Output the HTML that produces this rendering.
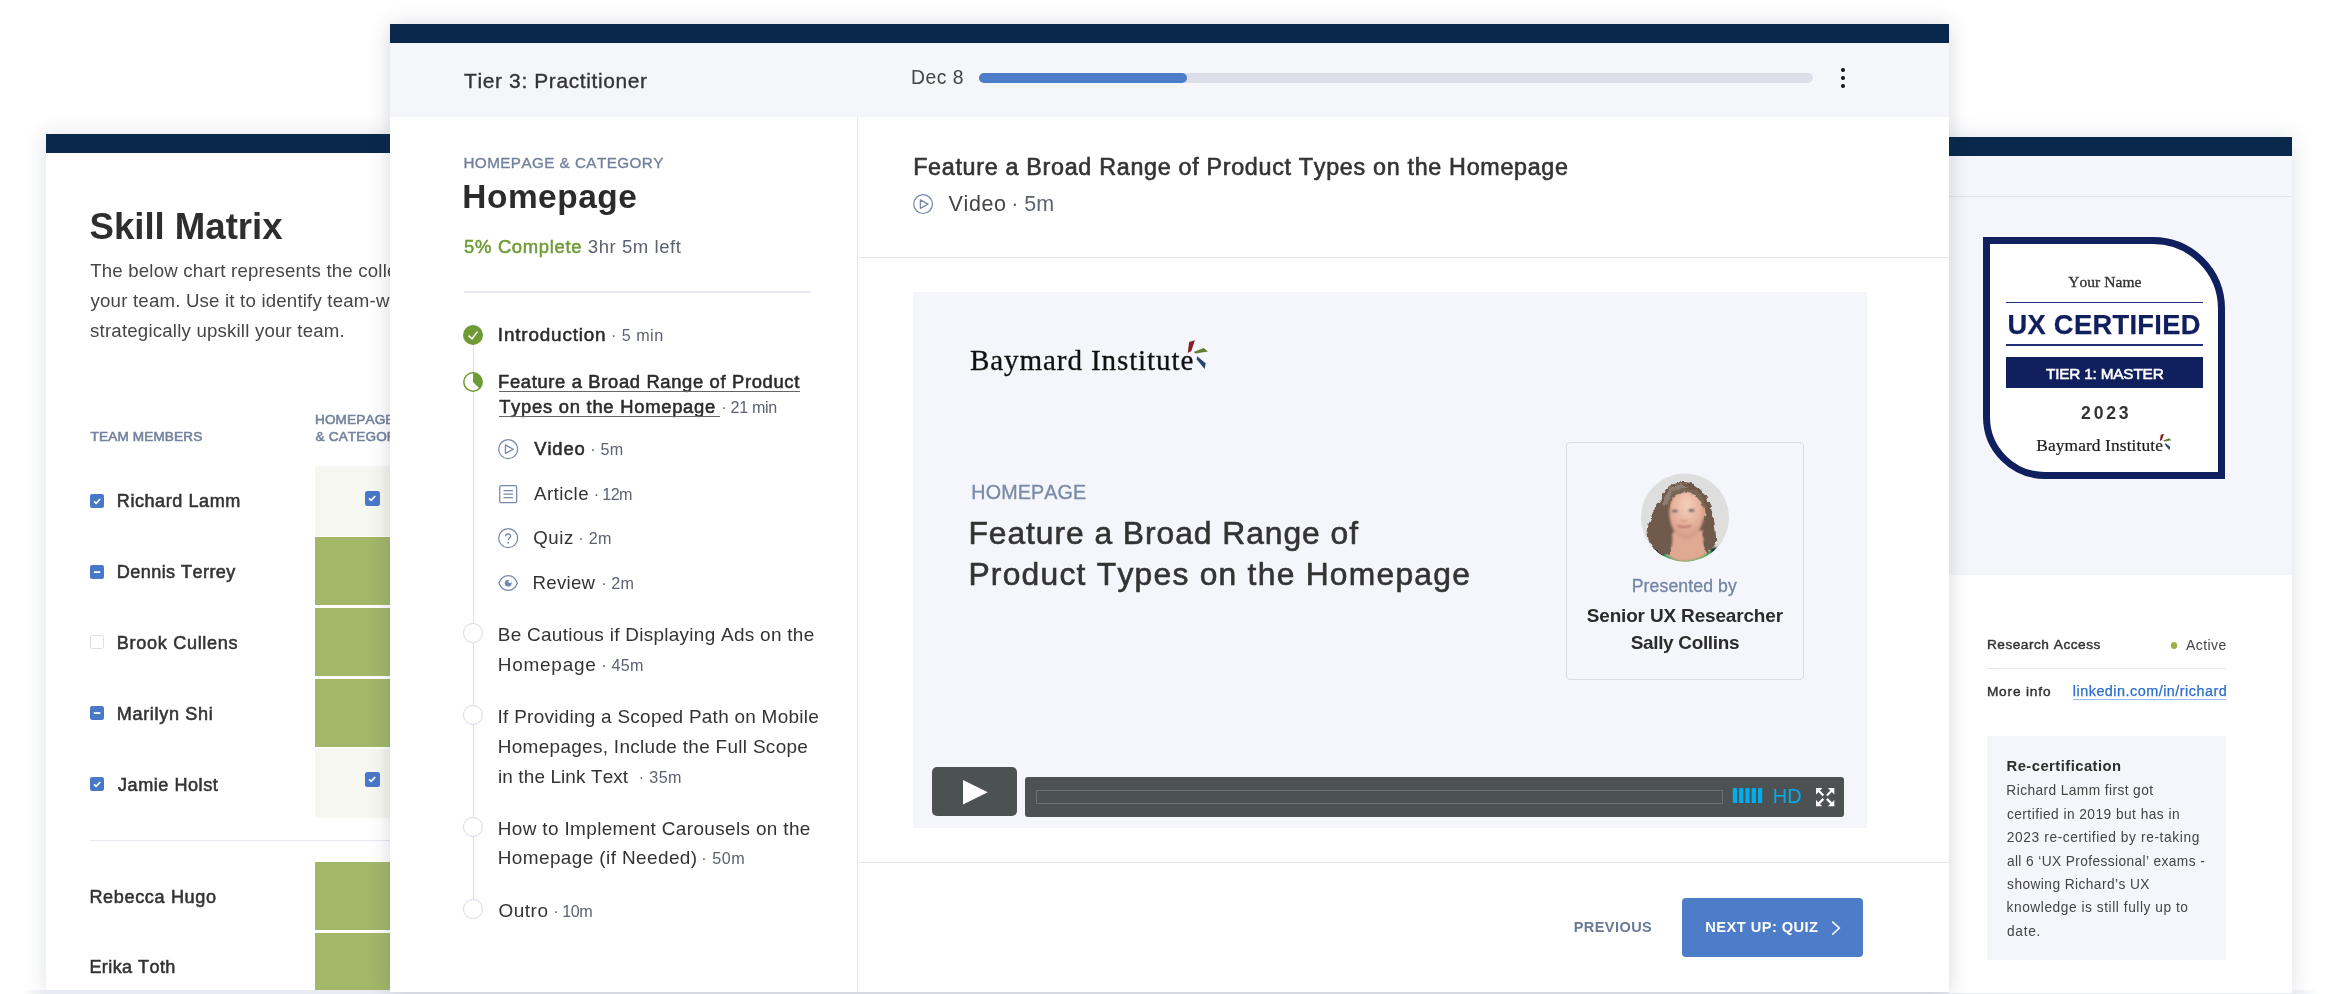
<!DOCTYPE html>
<html lang="en"><head><meta charset="utf-8"><title>Baymard UX Training</title>
<style>
html,body{margin:0;padding:0;background:#fff;}
body{width:2340px;height:994px;position:relative;overflow:hidden;font-family:"Liberation Sans",sans-serif;font-kerning:none;-webkit-font-smoothing:antialiased;}
.t{position:absolute;white-space:pre;font-kerning:none;font-variant-ligatures:none;}
#root{position:absolute;left:0;top:0;width:2340px;height:994px;overflow:hidden;will-change:transform;}
.r{position:absolute;}
.r>svg{display:block}
svg.r{display:block;overflow:visible}
.abs{position:absolute;width:2340px;height:994px}
.card{position:absolute;background:#fff;box-shadow:0 1px 21px rgba(35,45,75,.15);}
.clip{position:absolute;overflow:hidden}
#foot{position:absolute;left:0;top:990px;width:2340px;height:4px;}
</style></head><body>
<div id="root">
<section id="skill-matrix" aria-label="Skill Matrix">
<div class="card" id="left" style="left:46px;top:134px;width:420px;height:855.6px;">
</div>
<div class="clip" id="leftc" style="left:46px;top:134px;width:344px;height:855.6px;">
<div class="abs" style="left:-46px;top:-134px;">
<div class="r" style="left:46.00px;top:134.00px;width:424.00px;height:19.00px;background:#09284b;"></div>
<span class="t" style="left:89.55px;top:208.70px;font-size:36.61px;line-height:36.61px;letter-spacing:-0.024px;color:#2e2e2e;font-weight:700;">Skill Matrix</span>
<span class="t" style="left:90.08px;top:322.20px;font-size:18.65px;line-height:18.65px;letter-spacing:0.193px;color:#464646;">strategically upskill your team.</span>
<span class="t" style="left:90.18px;top:262.00px;font-size:18.65px;line-height:18.65px;letter-spacing:0.193px;color:#464646;">The below chart represents the collective skill of</span>
<span class="t" style="left:90.55px;top:292.10px;font-size:18.65px;line-height:18.65px;letter-spacing:0.193px;color:#464646;">your team. Use it to identify team-wide gaps and</span>
<span class="t" style="left:90.60px;top:429.91px;font-size:13.57px;line-height:13.57px;letter-spacing:0.146px;color:#74839e;-webkit-text-stroke:0.6px #74839e;">TEAM MEMBERS</span>
<span class="t" style="left:314.99px;top:412.91px;font-size:13.57px;line-height:13.57px;letter-spacing:0.146px;color:#74839e;-webkit-text-stroke:0.6px #74839e;">HOMEPAGE</span>
<span class="t" style="left:315.62px;top:429.91px;font-size:13.57px;line-height:13.57px;letter-spacing:0.146px;color:#74839e;-webkit-text-stroke:0.6px #74839e;">&amp; CATEGORY</span>
<span class="t" style="left:116.79px;top:492.49px;font-size:18.08px;line-height:18.08px;letter-spacing:0.542px;color:#333;-webkit-text-stroke:0.55px #333;">Richard Lamm</span>
<div class="r" style="left:90px;top:493.7px;width:14.2px;height:14.2px;border-radius:2.2px;background:#4878c8;"><svg viewBox="0.4 0.4 14.2 14.2" width="14.2" height="14.2"><path d="M4.4 7.8 L6.6 9.8 L10.6 5.4" fill="none" stroke="#fff" stroke-width="1.7"/></svg></div>
<span class="t" style="left:116.79px;top:563.29px;font-size:18.08px;line-height:18.08px;letter-spacing:0.419px;color:#333;-webkit-text-stroke:0.55px #333;">Dennis Terrey</span>
<div class="r" style="left:90px;top:564.5px;width:14.2px;height:14.2px;border-radius:2.2px;background:#4878c8;"><svg viewBox="0.4 0.4 14.2 14.2" width="14.2" height="14.2"><path d="M4.3 7.5 H10.7" fill="none" stroke="#fff" stroke-width="1.8"/></svg></div>
<span class="t" style="left:116.79px;top:634.09px;font-size:18.08px;line-height:18.08px;letter-spacing:0.686px;color:#333;-webkit-text-stroke:0.55px #333;">Brook Cullens</span>
<div class="r" style="left:90px;top:635.3px;width:14.2px;height:14.2px;border:1px solid #dcdfe8;border-radius:2.2px;background:#fff;box-sizing:border-box"></div>
<span class="t" style="left:116.79px;top:704.89px;font-size:18.08px;line-height:18.08px;letter-spacing:0.653px;color:#333;-webkit-text-stroke:0.55px #333;">Marilyn Shi</span>
<div class="r" style="left:90px;top:706.1px;width:14.2px;height:14.2px;border-radius:2.2px;background:#4878c8;"><svg viewBox="0.4 0.4 14.2 14.2" width="14.2" height="14.2"><path d="M4.3 7.5 H10.7" fill="none" stroke="#fff" stroke-width="1.8"/></svg></div>
<span class="t" style="left:117.99px;top:775.69px;font-size:18.08px;line-height:18.08px;letter-spacing:0.532px;color:#333;-webkit-text-stroke:0.55px #333;">Jamie Holst</span>
<div class="r" style="left:90px;top:776.9px;width:14.2px;height:14.2px;border-radius:2.2px;background:#4878c8;"><svg viewBox="0.4 0.4 14.2 14.2" width="14.2" height="14.2"><path d="M4.4 7.8 L6.6 9.8 L10.6 5.4" fill="none" stroke="#fff" stroke-width="1.7"/></svg></div>
<div class="r" style="left:314.50px;top:466.30px;width:155.50px;height:69.70px;background:#f6f7f0;"></div>
<div class="r" style="left:314.50px;top:537.20px;width:155.50px;height:68.00px;background:#a2b768;"></div>
<div class="r" style="left:314.50px;top:608.00px;width:155.50px;height:68.00px;background:#a2b768;"></div>
<div class="r" style="left:314.50px;top:679.00px;width:155.50px;height:67.80px;background:#a2b768;"></div>
<div class="r" style="left:314.50px;top:749.00px;width:155.50px;height:68.80px;background:#f6f7f0;"></div>
<div class="r" style="left:315.00px;top:862.20px;width:155.00px;height:68.00px;background:#a2b768;"></div>
<div class="r" style="left:315.00px;top:933.00px;width:155.00px;height:56.60px;background:#a2b768;"></div>
<div class="r" style="left:365px;top:491.3px;width:15px;height:15px;border-radius:2.5px;background:#4878c8;"><svg viewBox="0.4 0.4 14.2 14.2" width="14.2" height="14.2"><path d="M4.4 7.8 L6.6 9.8 L10.6 5.4" fill="none" stroke="#fff" stroke-width="1.7"/></svg></div>
<div class="r" style="left:364.7px;top:772.4px;width:15px;height:15px;border-radius:2.5px;background:#4878c8;"><svg viewBox="0.4 0.4 14.2 14.2" width="14.2" height="14.2"><path d="M4.4 7.8 L6.6 9.8 L10.6 5.4" fill="none" stroke="#fff" stroke-width="1.7"/></svg></div>
<div class="r" style="left:90.00px;top:839.70px;width:380.00px;height:1.20px;background:#e6e9f0;"></div>
<span class="t" style="left:89.39px;top:888.39px;font-size:18.08px;line-height:18.08px;letter-spacing:0.644px;color:#333;-webkit-text-stroke:0.55px #333;">Rebecca Hugo</span>
<span class="t" style="left:89.39px;top:958.49px;font-size:18.08px;line-height:18.08px;letter-spacing:0.401px;color:#333;-webkit-text-stroke:0.55px #333;">Erika Toth</span>
</div></div>
</section>
<section id="certification" aria-label="UX Certification">
<div class="card" id="right" style="left:1880px;top:137px;width:412.3px;height:855.6px;"></div>
<div class="r" style="left:1880.00px;top:137.20px;width:412.30px;height:18.60px;background:#09284b;"></div>
<div class="r" style="left:1880.00px;top:155.80px;width:412.30px;height:419.20px;background:#f5f6fb;"></div>
<div class="r" style="left:1880.00px;top:196.00px;width:412.30px;height:1.10px;background:#dfe2ee;"></div>
<div class="r" style="left:1983px;top:236.7px;width:242.3px;height:242.1px;box-sizing:border-box;border:7.3px solid #101f5e;background:#fff;border-top-right-radius:72px;border-bottom-left-radius:62px;"></div>
<span class="t" style="left:2068.20px;top:273.80px;font-size:15.53px;line-height:15.53px;letter-spacing:0.061px;color:#333;font-family:'Liberation Serif',serif;-webkit-text-stroke:0.35px #333;">Your Name</span>
<div class="r" style="left:2006.00px;top:302.10px;width:197.00px;height:1.40px;background:#22307a;"></div>
<span class="t" style="left:2007.39px;top:311.11px;font-size:27.27px;line-height:27.27px;letter-spacing:0.342px;color:#101f5e;font-weight:700;-webkit-text-stroke:0.25px #101f5e;">UX CERTIFIED</span>
<div class="r" style="left:2006.00px;top:344.20px;width:197.00px;height:1.40px;background:#22307a;"></div>
<div class="r" style="left:2006.00px;top:357.30px;width:197.00px;height:31.10px;background:#101f5e;"></div>
<span class="t" style="left:2046.03px;top:365.52px;font-size:15.33px;line-height:15.33px;letter-spacing:-0.185px;color:#fff;-webkit-text-stroke:0.55px #fff;">TIER 1: MASTER</span>
<span class="t" style="left:2081.09px;top:405.09px;font-size:17.61px;line-height:17.61px;letter-spacing:2.791px;color:#333;font-weight:700;">2023</span>
<span class="t" style="left:2036.20px;top:436.75px;font-size:17.38px;line-height:17.38px;letter-spacing:0.118px;color:#1a1a1a;font-family:'Liberation Serif',serif;-webkit-text-stroke:0.2px #1a1a1a;">Baymard Institute</span>
<svg class="r" style="left:0;top:0" width="2340" height="994" viewBox="0 0 2340 994"><polygon points="2160.72,434.85 2163.97,433.77 2161.92,439.98 2159.87,441.00" fill="#8a1c22"/><polygon points="2163.28,440.43 2168.92,438.21 2171.42,440.20 2164.31,441.40" fill="#5f7f2e"/><polygon points="2165.16,442.93 2170.11,446.86 2169.48,450.16 2165.05,444.70" fill="#2a4470"/></svg>
<span class="t" style="left:1986.90px;top:638.13px;font-size:13.66px;line-height:13.66px;letter-spacing:0.518px;color:#333;-webkit-text-stroke:0.45px #333;">Research Access</span>
<div class="r" style="left:2170.5px;top:642.2px;width:6.8px;height:6.8px;border-radius:50%;background:#9ab13e"></div>
<span class="t" style="left:2185.97px;top:638.32px;font-size:14.03px;line-height:14.03px;letter-spacing:0.411px;color:#444;">Active</span>
<div class="r" style="left:1987.00px;top:667.90px;width:239.00px;height:1.10px;background:#e4e7ef;"></div>
<span class="t" style="left:1986.90px;top:685.03px;font-size:13.66px;line-height:13.66px;letter-spacing:0.836px;color:#333;-webkit-text-stroke:0.45px #333;">More info</span>
<span class="t" style="left:2072.85px;top:684.40px;font-size:14.41px;line-height:14.41px;letter-spacing:0.479px;color:#2a6dcc;-webkit-text-stroke:0.25px #2a6dcc;">linkedin.com/in/richard</span>
<div class="r" style="left:2073.00px;top:698.60px;width:153.00px;height:1.00px;background:#9fbde9;"></div>
<div class="r" style="left:1986.80px;top:736.20px;width:239.20px;height:223.50px;background:#f5f6fb;"></div>
<span class="t" style="left:2006.51px;top:759.24px;font-size:14.83px;line-height:14.83px;letter-spacing:0.445px;color:#2d2d2d;font-weight:700;">Re-certification</span>
<span class="t" style="left:2006.37px;top:784.48px;font-size:13.72px;line-height:13.72px;letter-spacing:0.412px;color:#444;">Richard Lamm first got</span>
<span class="t" style="left:2006.92px;top:807.84px;font-size:13.72px;line-height:13.72px;letter-spacing:0.464px;color:#444;">certified in 2019 but has in</span>
<span class="t" style="left:2006.81px;top:831.20px;font-size:13.72px;line-height:13.72px;letter-spacing:0.616px;color:#444;">2023 re-certified by re-taking</span>
<span class="t" style="left:2006.92px;top:854.56px;font-size:13.72px;line-height:13.72px;letter-spacing:0.392px;color:#444;">all 6 ‘UX Professional’ exams -</span>
<span class="t" style="left:2007.12px;top:877.92px;font-size:13.72px;line-height:13.72px;letter-spacing:0.431px;color:#444;">showing Richard’s UX</span>
<span class="t" style="left:2006.58px;top:901.28px;font-size:13.72px;line-height:13.72px;letter-spacing:0.550px;color:#444;">knowledge is still fully up to</span>
<span class="t" style="left:2006.92px;top:924.64px;font-size:13.72px;line-height:13.72px;letter-spacing:0.730px;color:#444;">date.</span>
</section>
<section id="course" aria-label="Course player">
<div class="r" style="left:22px;top:989.6px;width:2296px;height:5px;background:linear-gradient(to right,rgba(232,235,241,0) 0,#e8ebf1 24px,#e8ebf1 2270px,rgba(232,235,241,0) 2296px)"></div>
<div class="r" style="left:1949.00px;top:989.60px;width:343.30px;height:3.00px;background:#fff;"></div>
<div class="card" id="center" style="left:390px;top:24px;width:1558.7px;height:967.8px;box-shadow:0 1px 20px rgba(35,45,75,.19)"></div>
<div class="r" style="left:390.00px;top:24.20px;width:1558.70px;height:18.60px;background:#09284b;"></div>
<div class="r" style="left:390.00px;top:42.80px;width:1558.70px;height:74.20px;background:#f5f6fa;"></div>
<div class="r" style="left:857.00px;top:117.00px;width:1.20px;height:874.80px;background:#e4e7ee;"></div>
<span class="t" style="left:464.10px;top:70.67px;font-size:20.94px;line-height:20.94px;letter-spacing:0.628px;color:#333;-webkit-text-stroke:0.35px #333;">Tier 3: Practitioner</span>
<span class="t" style="left:911.01px;top:68.11px;font-size:19.36px;line-height:19.36px;letter-spacing:0.466px;color:#444;">Dec 8</span>
<div class="r" style="left:978.70px;top:72.90px;width:834.50px;height:10.10px;background:#dcdfe9;border-radius:5px"></div>
<div class="r" style="left:978.70px;top:72.90px;width:208.80px;height:10.10px;background:#4d7cc9;border-radius:5px"></div>
<div class="r" style="left:1841px;top:68.0px;width:4.2px;height:4.2px;border-radius:50%;background:#111"></div>
<div class="r" style="left:1841px;top:75.8px;width:4.2px;height:4.2px;border-radius:50%;background:#111"></div>
<div class="r" style="left:1841px;top:83.5px;width:4.2px;height:4.2px;border-radius:50%;background:#111"></div>
<span class="t" style="left:463.43px;top:154.72px;font-size:15.21px;line-height:15.21px;letter-spacing:0.456px;color:#72819c;-webkit-text-stroke:0.35px #72819c;">HOMEPAGE &amp; CATEGORY</span>
<span class="t" style="left:462.37px;top:180.34px;font-size:33.38px;line-height:33.38px;letter-spacing:0.531px;color:#2b2b2b;font-weight:700;">Homepage</span>
<span class="t" style="left:464.11px;top:237.76px;font-size:18.47px;line-height:18.47px;letter-spacing:0.659px;color:#6e9b34;-webkit-text-stroke:0.5px #6e9b34;">5% Complete<span style="margin-left:5.66px;font-size:18.56px;letter-spacing:0.557px;color:#5d6272;font-weight:400;-webkit-text-stroke:0px #5d6272;">3hr 5m left</span></span>
<div class="r" style="left:464.00px;top:291.40px;width:347.00px;height:1.20px;background:#e6e9f0;"></div>
<div class="r" style="left:472.60px;top:344.00px;width:1.20px;height:555.00px;background:#dde0ec;"></div>
<svg class="r" style="left:463.1px;top:325.1px" width="20" height="20" viewBox="0 0 20 20"><circle cx="10" cy="10" r="10" fill="#6f9b37"/><path d="M5.6 10.6 L9 13.9 L14.4 6.6" fill="none" stroke="#fff" stroke-width="1.5"/></svg>
<span class="t" style="left:497.84px;top:325.55px;font-size:18.84px;line-height:18.84px;letter-spacing:0.852px;color:#2b2b2b;-webkit-text-stroke:0.55px #2b2b2b;">Introduction<span style="margin-left:4.48px;font-size:16.15px;letter-spacing:0.485px;color:#5d6272;font-weight:400;-webkit-text-stroke:0px #5d6272;">· 5 min</span></span>
<svg class="r" style="left:463.1px;top:372px" width="20" height="20" viewBox="0 0 20 20"><circle cx="10" cy="10" r="9.2" fill="#fff" stroke="#6f9b37" stroke-width="1.5"/><path d="M10 10 L10 0.8 A9.2 9.2 0 0 1 16.5 16.5 Z" fill="#6f9b37"/></svg>
<span class="t" style="left:498.07px;top:373.13px;font-size:18.39px;line-height:18.39px;letter-spacing:0.655px;color:#2b2b2b;-webkit-text-stroke:0.55px #2b2b2b;">Feature a Broad Range of Product</span>
<div class="r" style="left:498.70px;top:391.20px;width:301.00px;height:0.90px;background:#666;"></div>
<span class="t" style="left:499.16px;top:398.13px;font-size:18.39px;line-height:18.39px;letter-spacing:0.743px;color:#2b2b2b;-webkit-text-stroke:0.55px #2b2b2b;">Types on the Homepage<span style="margin-left:5.50px;font-size:16.15px;letter-spacing:-0.382px;color:#5d6272;font-weight:400;-webkit-text-stroke:0px #5d6272;">· 21 min</span></span>
<div class="r" style="left:498.70px;top:415.70px;width:221.10px;height:0.90px;background:#666;"></div>
<svg class="r" style="left:497.7px;top:439.2px" width="20.4" height="20.4" viewBox="0 0 20 20"><circle cx="10" cy="10" r="9.3" fill="none" stroke="#7587a8" stroke-width="1.2"/><path d="M7.3 5.8 L14.9 10 L7.3 14.2 Z" fill="none" stroke="#7587a8" stroke-width="1.25" stroke-linejoin="round"/></svg>
<span class="t" style="left:534.29px;top:439.73px;font-size:18.39px;line-height:18.39px;letter-spacing:0.865px;color:#2b2b2b;-webkit-text-stroke:0.55px #2b2b2b;">Video<span style="margin-left:4.62px;font-size:16.15px;letter-spacing:0.260px;color:#5d6272;font-weight:400;-webkit-text-stroke:0px #5d6272;">· 5m</span></span>
<svg class="r" style="left:499px;top:484.8px" width="18.4" height="18.4" viewBox="0 0 18 18"><rect x="0.7" y="0.7" width="16.6" height="16.6" rx="1.5" fill="none" stroke="#7587a8" stroke-width="1.2"/><path d="M4.4 5.6 H13.6 M4.4 9 H13.6 M4.4 12.4 H13.6" stroke="#7587a8" stroke-width="1.2"/></svg>
<span class="t" style="left:534.06px;top:484.60px;font-size:18.65px;line-height:18.65px;letter-spacing:0.456px;color:#333;">Article<span style="margin-left:4.70px;font-size:16.15px;letter-spacing:-0.625px;color:#5d6272;font-weight:400;-webkit-text-stroke:0px #5d6272;">· 12m</span></span>
<svg class="r" style="left:497.7px;top:528.1px" width="20.4" height="20.4" viewBox="0 0 20 20"><circle cx="10" cy="10" r="9.3" fill="none" stroke="#7587a8" stroke-width="1.2"/><path d="M7.6 8.0 C7.6 5.2 12.4 5.2 12.4 8.0 C12.4 9.8 10 9.9 10 11.9" fill="none" stroke="#7587a8" stroke-width="1.3"/><circle cx="10" cy="14.4" r="0.9" fill="#7587a8"/></svg>
<span class="t" style="left:533.22px;top:529.40px;font-size:18.65px;line-height:18.65px;letter-spacing:0.552px;color:#333;">Quiz<span style="margin-left:4.60px;font-size:16.15px;letter-spacing:0.227px;color:#5d6272;font-weight:400;-webkit-text-stroke:0px #5d6272;">· 2m</span></span>
<svg class="r" style="left:497.7px;top:575.4px" width="20.4" height="16" viewBox="0 0 20 16"><path d="M0.8 8 C4.5 -1.8 15.5 -1.8 19.2 8 C15.5 17.8 4.5 17.8 0.8 8 Z" fill="none" stroke="#7587a8" stroke-width="1.25" stroke-linejoin="round"/><circle cx="10" cy="8.2" r="3.4" fill="#7587a8"/><circle cx="11.7" cy="6.5" r="1.5" fill="#fff"/></svg>
<span class="t" style="left:532.57px;top:574.20px;font-size:18.65px;line-height:18.65px;letter-spacing:0.264px;color:#333;">Review<span style="margin-left:5.87px;font-size:16.15px;letter-spacing:0.160px;color:#5d6272;font-weight:400;-webkit-text-stroke:0px #5d6272;">· 2m</span></span>
<div class="r" style="left:463.2px;top:623.2px;width:19.8px;height:19.8px;border-radius:50%;background:#fff;border:1.3px solid #d6d9e8;box-sizing:border-box"></div>
<div class="r" style="left:463.2px;top:705.3px;width:19.8px;height:19.8px;border-radius:50%;background:#fff;border:1.3px solid #d6d9e8;box-sizing:border-box"></div>
<div class="r" style="left:463.2px;top:816.9px;width:19.8px;height:19.8px;border-radius:50%;background:#fff;border:1.3px solid #d6d9e8;box-sizing:border-box"></div>
<div class="r" style="left:463.2px;top:898.8px;width:19.8px;height:19.8px;border-radius:50%;background:#fff;border:1.3px solid #d6d9e8;box-sizing:border-box"></div>
<span class="t" style="left:497.75px;top:626.47px;font-size:18.94px;line-height:18.94px;letter-spacing:0.289px;color:#333;">Be Cautious if Displaying Ads on the</span>
<span class="t" style="left:497.75px;top:656.37px;font-size:18.94px;line-height:18.94px;letter-spacing:0.766px;color:#333;">Homepage<span style="margin-left:4.68px;font-size:16.15px;letter-spacing:0.250px;color:#5d6272;font-weight:400;-webkit-text-stroke:0px #5d6272;">· 45m</span></span>
<span class="t" style="left:497.55px;top:707.97px;font-size:18.94px;line-height:18.94px;letter-spacing:0.275px;color:#333;">If Providing a Scoped Path on Mobile</span>
<span class="t" style="left:497.75px;top:737.87px;font-size:18.94px;line-height:18.94px;letter-spacing:0.316px;color:#333;">Homepages, Include the Full Scope</span>
<span class="t" style="left:498.03px;top:767.77px;font-size:18.94px;line-height:18.94px;letter-spacing:0.113px;color:#333;">in the Link Text<span style="margin-left:10.43px;font-size:16.15px;letter-spacing:0.375px;color:#5d6272;font-weight:400;-webkit-text-stroke:0px #5d6272;">· 35m</span></span>
<span class="t" style="left:497.75px;top:819.67px;font-size:18.94px;line-height:18.94px;letter-spacing:0.362px;color:#333;">How to Implement Carousels on the</span>
<span class="t" style="left:497.75px;top:849.27px;font-size:18.94px;line-height:18.94px;letter-spacing:0.409px;color:#333;">Homepage (if Needed)<span style="margin-left:3.70px;font-size:16.15px;letter-spacing:0.575px;color:#5d6272;font-weight:400;-webkit-text-stroke:0px #5d6272;">· 50m</span></span>
<span class="t" style="left:498.40px;top:901.67px;font-size:18.94px;line-height:18.94px;letter-spacing:0.559px;color:#333;">Outro<span style="margin-left:4.63px;font-size:16.15px;letter-spacing:-0.425px;color:#5d6272;font-weight:400;-webkit-text-stroke:0px #5d6272;">· 10m</span></span>
<span class="t" style="left:913.19px;top:155.57px;font-size:23.30px;line-height:23.30px;letter-spacing:0.699px;color:#333;-webkit-text-stroke:0.6px #333;">Feature a Broad Range of Product Types on the Homepage</span>
<svg class="r" style="left:912.8px;top:194.3px" width="20.2" height="20.2" viewBox="0 0 20 20"><circle cx="10" cy="10" r="9.3" fill="none" stroke="#7587a8" stroke-width="1.2"/><path d="M7.3 5.8 L14.9 10 L7.3 14.2 Z" fill="none" stroke="#7587a8" stroke-width="1.25" stroke-linejoin="round"/></svg>
<span class="t" style="left:948.51px;top:194.42px;font-size:21.47px;line-height:21.47px;letter-spacing:0.644px;color:#444;">Video<span style="margin-left:4.61px;font-size:21.46px;letter-spacing:-0.020px;color:#5d6272;font-weight:400;-webkit-text-stroke:0px #5d6272;">· 5m</span></span>
<div class="r" style="left:858.20px;top:256.70px;width:1090.50px;height:1.10px;background:#e4e7ee;"></div>
<div class="r" style="left:913.00px;top:291.50px;width:954.00px;height:536.20px;background:#f5f6fb;"></div>
<span class="t" style="left:970.01px;top:346.02px;font-size:29.11px;line-height:29.11px;letter-spacing:0.873px;color:#111;font-family:'Liberation Serif',serif;-webkit-text-stroke:0.3px #111;">Baymard Institute</span>
<svg class="r" style="left:0;top:0" width="2340" height="994" viewBox="0 0 2340 994"><polygon points="1189.20,342.10 1194.90,340.20 1191.30,351.10 1187.70,352.90" fill="#8a1c22"/><polygon points="1193.70,351.90 1203.60,348.00 1208.00,351.50 1195.50,353.60" fill="#5f7f2e"/><polygon points="1197.00,356.30 1205.70,363.20 1204.60,369.00 1196.80,359.40" fill="#2a4470"/></svg>
<span class="t" style="left:971.36px;top:482.73px;font-size:19.69px;line-height:19.69px;letter-spacing:0.133px;color:#7a8ba8;-webkit-text-stroke:0.35px #7a8ba8;">HOMEPAGE</span>
<span class="t" style="left:968.39px;top:517.57px;font-size:31.80px;line-height:31.80px;letter-spacing:0.954px;color:#333;-webkit-text-stroke:0.6px #333;">Feature a Broad Range of</span>
<span class="t" style="left:968.39px;top:558.67px;font-size:31.80px;line-height:31.80px;letter-spacing:1.247px;color:#333;-webkit-text-stroke:0.6px #333;">Product Types on the Homepage</span>
<div class="r" style="left:1566px;top:442.2px;width:237.9px;height:238.2px;border:1.2px solid #d9dce4;border-radius:4px;box-sizing:border-box"></div>
<svg class="r" style="left:1630px;top:465px" width="110" height="105" viewBox="0 0 1041 994"><defs><clipPath id="av"><circle cx="520" cy="498" r="417"/></clipPath><filter id="bl" x="-10%" y="-10%" width="120%" height="120%"><feGaussianBlur stdDeviation="8"/></filter><filter id="cu" x="-10%" y="-10%" width="120%" height="120%"><feTurbulence type="fractalNoise" baseFrequency="0.022" numOctaves="2" seed="7" result="n"/><feDisplacementMap in="SourceGraphic" in2="n" scale="46" xChannelSelector="R" yChannelSelector="G"/><feGaussianBlur stdDeviation="7"/></filter><radialGradient id="sk" cx="0.5" cy="0.3" r="0.75"><stop offset="0" stop-color="#f4d0bc"/><stop offset="0.55" stop-color="#e6b19b"/><stop offset="1" stop-color="#cf9680"/></radialGradient></defs><g clip-path="url(#av)"><rect width="1041" height="994" fill="#dedede"/><g filter="url(#cu)"><path d="M500 160 C400 160 320 220 300 310 C250 380 215 440 195 510 C165 580 160 660 180 720 C200 790 250 830 310 860 L420 860 L700 840 C760 820 800 790 815 730 C815 650 800 560 790 500 C775 420 745 340 715 290 C680 210 600 160 500 160 Z" fill="#6f5a4b"/><path d="M480 175 C400 185 340 240 320 330 C280 400 250 470 235 560 C260 470 330 400 390 300 C430 240 500 210 560 215 Z" fill="#8e7d70"/><path d="M200 560 C190 640 210 730 270 800 C250 720 250 640 270 560 Z" fill="#5a4638"/><path d="M770 480 C800 580 810 680 790 760 C770 700 760 600 740 520 Z" fill="#5a4638"/></g><g filter="url(#bl)"><path d="M400 640 L690 620 L700 760 C740 800 760 830 770 860 C700 900 600 925 520 925 C430 925 360 900 335 850 C370 810 395 780 400 740 Z" fill="#dfa992"/><path d="M372 440 C372 300 440 248 530 248 C625 248 700 320 700 440 C700 590 620 702 530 702 C450 702 372 600 372 440 Z" fill="url(#sk)"/><ellipse cx="718" cy="465" rx="22" ry="68" fill="#dca58e"/><path d="M225 785 L335 800 L350 872 L285 858 Z" fill="#1d1d1d"/><path d="M752 792 L825 772 L800 830 L765 852 Z" fill="#1d1d1d"/><path d="M328 822 C365 880 440 910 520 910 C620 910 715 868 765 796 L775 832 C720 902 620 940 520 940 C430 940 350 912 312 852 Z" fill="#1ea558"/></g><g filter="url(#cu)"><path d="M300 330 C330 420 360 520 370 640 C385 720 400 790 380 850 L300 850 C230 800 180 720 180 640 C190 520 240 420 300 330 Z" fill="#6f5a4b"/><path d="M700 330 C720 400 715 520 700 620 C690 700 700 780 725 835 C780 800 815 760 812 700 C805 580 780 440 740 340 Z" fill="#6f5a4b"/><path d="M400 250 C450 215 600 215 650 260 C690 300 700 340 705 400 C660 340 640 290 560 262 C500 255 440 270 395 330 C380 360 375 400 372 430 C360 360 370 290 400 250 Z" fill="#7a6656"/></g><g filter="url(#bl)" opacity="0.9"><ellipse cx="425" cy="436" rx="30" ry="11" fill="#4a4a52"/><ellipse cx="582" cy="431" rx="30" ry="11" fill="#4a4a52"/><path d="M455 578 C490 590 540 590 578 574" stroke="#a8575a" stroke-width="14" fill="none"/><path d="M480 522 C500 537 520 537 540 522" stroke="#c58a76" stroke-width="12" fill="none"/></g></g></svg>
<span class="t" style="left:1631.70px;top:577.95px;font-size:17.66px;line-height:17.66px;letter-spacing:0.103px;color:#7285a5;-webkit-text-stroke:0.3px #7285a5;">Presented by</span>
<span class="t" style="left:1586.75px;top:607.17px;font-size:18.94px;line-height:18.94px;letter-spacing:-0.141px;color:#2b2b2b;font-weight:700;">Senior UX Researcher</span>
<span class="t" style="left:1630.65px;top:634.47px;font-size:18.94px;line-height:18.94px;letter-spacing:-0.306px;color:#2b2b2b;font-weight:700;">Sally Collins</span>
<div class="r" style="left:932.00px;top:767.10px;width:84.50px;height:49.40px;background:#4c5252;border-radius:5px"></div>
<svg class="r" style="left:962.8px;top:779.5px" width="24.8" height="24.6" viewBox="0 0 24.8 24.6"><path d="M0 0 L24.8 12.3 L0 24.6 Z" fill="#fff"/></svg>
<div class="r" style="left:1025.00px;top:777.00px;width:818.60px;height:39.60px;background:#4c5252;border-radius:3px"></div>
<div class="r" style="left:1036.3px;top:789.8px;width:686.5px;height:13.8px;border:1px solid #6c7171;box-sizing:border-box"></div>
<svg class="r" style="left:1732px;top:787px" width="32" height="18" viewBox="0 0 32 18"><rect x="0.80" y="1.1" width="4.2" height="14.9" fill="#00adef"/><rect x="7.10" y="1.1" width="4.2" height="14.9" fill="#00adef"/><rect x="13.40" y="1.1" width="4.2" height="14.9" fill="#00adef"/><rect x="19.70" y="1.1" width="4.2" height="14.9" fill="#00adef"/><rect x="26.00" y="1.1" width="4.2" height="14.9" fill="#00adef"/></svg>
<span class="t" style="left:1772.87px;top:787.04px;font-size:19.92px;line-height:19.92px;letter-spacing:0.020px;color:#00adef;">HD</span>
<svg class="r" style="left:1815.8px;top:787.9px" width="18.3" height="18.3" viewBox="0 0 18 18"><g fill="#fff" stroke="none"><path d="M0 0 H6.3 L0 6.3 Z"/><path d="M18 0 V6.3 L11.7 0 Z"/><path d="M0 18 V11.7 L6.3 18 Z"/><path d="M18 18 H11.7 L18 11.7 Z"/></g><g stroke="#fff" stroke-width="2.2" fill="none"><path d="M2.4 2.4 L7.3 7.3"/><path d="M15.6 2.4 L10.7 7.3"/><path d="M2.4 15.6 L7.3 10.7"/><path d="M15.6 15.6 L10.7 10.7"/></g></svg>
<div class="r" style="left:858.20px;top:861.70px;width:1090.50px;height:1.10px;background:#e4e7ee;"></div>
<span class="t" style="left:1573.73px;top:920.30px;font-size:14.53px;line-height:14.53px;letter-spacing:0.436px;color:#6b7a94;font-weight:700;">PREVIOUS</span>
<div class="r" style="left:1682.00px;top:897.70px;width:181.00px;height:59.30px;background:#4d7cc9;border-radius:4px"></div>
<span class="t" style="left:1705.32px;top:920.19px;font-size:14.66px;line-height:14.66px;letter-spacing:0.440px;color:#fff;font-weight:700;">NEXT UP: QUIZ</span>
<svg class="r" style="left:1830px;top:919.5px" width="12" height="16" viewBox="0 0 12 16"><path d="M2.2 1.6 L9.4 8.1 L2.2 14.6" fill="none" stroke="#fff" stroke-width="1.5"/></svg>
</section>
</div>
</body></html>
